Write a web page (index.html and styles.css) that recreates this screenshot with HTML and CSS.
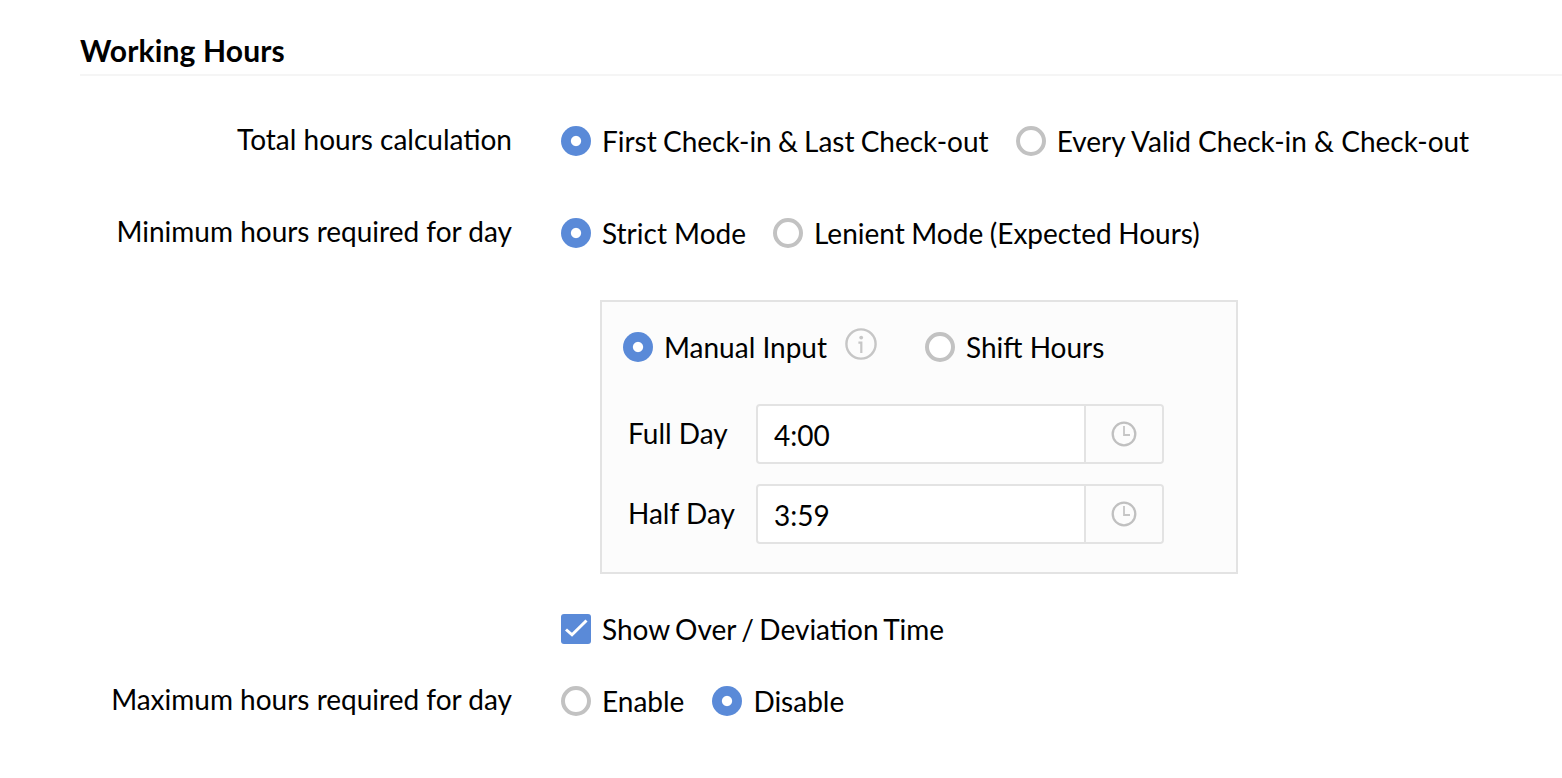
FILE: index.html
```html
<!DOCTYPE html>
<html lang="en">
<head>
<meta charset="utf-8">
<title>Working Hours</title>
<link rel="stylesheet" href="styles.css">
</head>
<body>
<main class="page">
  <h1 class="title">Working Hours</h1>

  <div class="row row-total">
    <div class="label">Total hours calculation</div>
    <div class="options">
      <span class="opt tight-a"><i class="radio on"></i>First Check-in &amp; Last Check-out</span>
      <span class="opt"><i class="radio"></i>Every Valid Check-in &amp; Check-out</span>
    </div>
  </div>

  <div class="row row-min">
    <div class="label">Minimum hours required for day</div>
    <div class="options">
      <span class="opt"><i class="radio on"></i>Strict Mode</span>
      <span class="opt tight-c"><i class="radio"></i>Lenient Mode (Expected Hours)</span>
    </div>
  </div>

  <section class="box">
    <div class="box-options">
      <span class="opt"><i class="radio on"></i>Manual Input</span>
      <svg class="info" viewBox="0 0 32 32" width="32" height="32" aria-hidden="true">
        <circle cx="16" cy="16" r="14.6" fill="none" stroke="#c6c6c6" stroke-width="2.4"/>
        <circle cx="16.2" cy="9.6" r="1.9" fill="#c6c6c6"/>
        <path d="M13.4 14.6H16.3V25" fill="none" stroke="#c6c6c6" stroke-width="2.2"/>
      </svg>
      <span class="opt opt-shift"><i class="radio"></i>Shift Hours</span>
    </div>
    <div class="time-row">
      <span class="time-label">Full Day</span>
      <div class="time-group">
        <span class="time-value">4:00</span>
        <span class="time-btn">
          <svg viewBox="0 0 26 26" width="26" height="26" aria-hidden="true"><circle cx="13" cy="13" r="11.3" fill="none" stroke="#c0c0c0" stroke-width="2.3"/><path d="M13 5V14H19" fill="none" stroke="#c6c6c6" stroke-width="1.8"/></svg>
        </span>
      </div>
    </div>
    <div class="time-row">
      <span class="time-label">Half Day</span>
      <div class="time-group">
        <span class="time-value">3:59</span>
        <span class="time-btn">
          <svg viewBox="0 0 26 26" width="26" height="26" aria-hidden="true"><circle cx="13" cy="13" r="11.3" fill="none" stroke="#c0c0c0" stroke-width="2.3"/><path d="M13 5V14H19" fill="none" stroke="#c6c6c6" stroke-width="1.8"/></svg>
        </span>
      </div>
    </div>
  </section>

  <div class="check-row">
    <span class="opt tight-b">
      <i class="check"><svg viewBox="0 0 30 30" width="30" height="30" aria-hidden="true"><path d="M5 15.5L11 20.8L25.5 6.5" fill="none" stroke="#fff" stroke-width="3"/></svg></i>
      Show Over / Deviation Time
    </span>
  </div>

  <div class="row row-max">
    <div class="label">Maximum hours required for day</div>
    <div class="options options-wide">
      <span class="opt"><i class="radio"></i>Enable</span>
      <span class="opt"><i class="radio on"></i>Disable</span>
    </div>
  </div>
</main>
</body>
</html>
```

FILE: styles.css
```css
* { box-sizing: border-box; }
html, body { margin: 0; background: #fff; }
body {
  font-family: Lato, "Open Sans", sans-serif;
  font-size: 28px;
  color: #000;
  height: 778px;
  overflow: hidden;
}
.page { padding: 30px 0 0 80px; }
.title {
  margin: 0;
  height: 46px;
  line-height: 40px;
  font-size: 30px;
  font-weight: 700;
  letter-spacing: 0.15px;
  border-bottom: 2px solid #f5f5f5;
}
.row {
  display: grid;
  grid-template-columns: 432px 1fr;
  column-gap: 49px;
  height: 34px;
  line-height: 34px;
}
.row-total { margin-top: 48px; }
.row-min { margin-top: 58px; }
.label { text-align: right; position: relative; top: -2px; }
.options { display: flex; gap: 27px; }
.options-wide { gap: 28px; }
.opt { display: inline-flex; align-items: center; gap: 11px; white-space: nowrap; }
.tight-a { word-spacing: -1px; }
.tight-b { word-spacing: -1.75px; }
.tight-c { word-spacing: -0.6px; }
.radio {
  flex: none;
  width: 30px;
  height: 30px;
  border-radius: 50%;
  border: 4px solid #c2c2c2;
  background: #fff;
}
.radio.on { border: 0; background: radial-gradient(circle, #fff 0 4.6px, #5a8ad8 5.6px); }
.box {
  width: 638px;
  height: 274px;
  margin: 50px 0 0 520px;
  padding: 28px 0 0 21px;
  border: 2px solid #e3e3e3;
  background: #fcfcfc;
}
.box-options { display: flex; align-items: center; height: 34px; }
.info { flex: none; margin: -6px 0 0 18px; }
.opt-shift { margin-left: 48px; }
.time-row { display: flex; align-items: center; margin-top: 20px; padding-left: 5px; }
.box-options + .time-row { margin-top: 40px; }
.time-label { width: 128px; position: relative; top: -1px; }
.time-group {
  display: flex;
  width: 408px;
  height: 60px;
  border: 2px solid #e3e3e3;
  border-radius: 4px;
  background: #fff;
}
.time-value { flex: 1; padding-left: 16px; line-height: 58px; }
.time-btn {
  display: flex;
  align-items: center;
  justify-content: center;
  width: 78px;
  border-left: 2px solid #e3e3e3;
  background: #fcfcfc;
  border-radius: 0 3px 3px 0;
}
.check-row { margin: 38px 0 0 481px; height: 34px; line-height: 34px; display: flex; }
.check {
  flex: none;
  width: 30px;
  height: 30px;
  border-radius: 3px;
  background: #5a8ad8;
  display: block;
}
.check svg { display: block; }
.row-max { margin-top: 38px; }
```
